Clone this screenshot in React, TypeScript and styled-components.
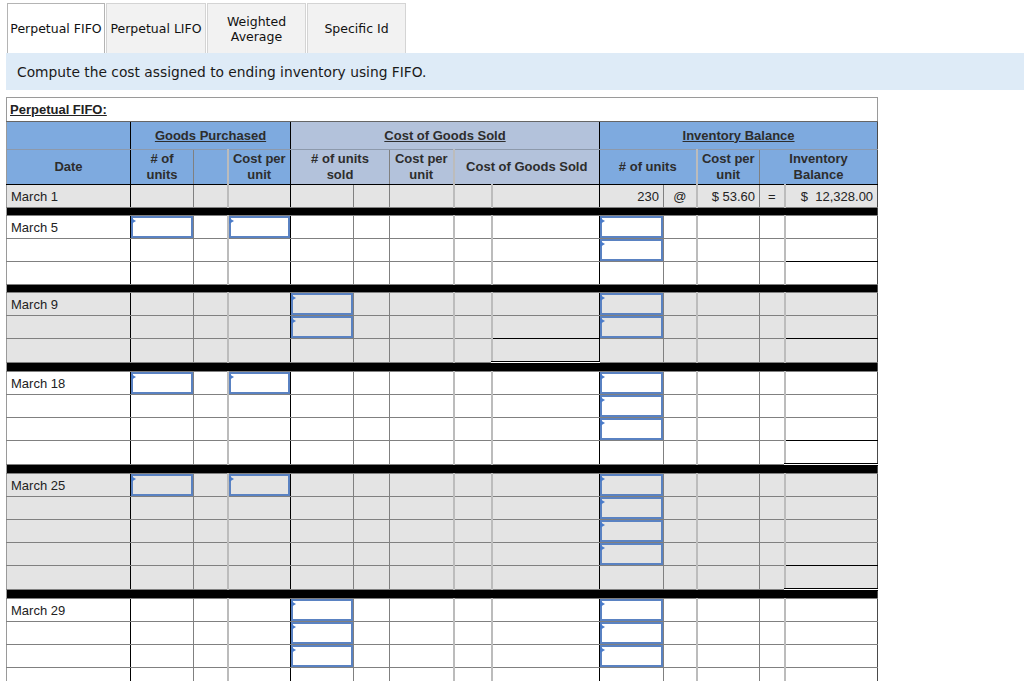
import React from "react";
import styled, { createGlobalStyle } from "styled-components";

const GlobalStyle = createGlobalStyle`
  html, body { margin: 0; padding: 0; background: #fff; overflow: hidden; }
  body { font-family: "Liberation Sans", Arial, sans-serif; }
`;

const Page = styled.div`
  padding: 3px 0 0 6px;
`;

const Tabs = styled.div`
  display: flex;
  gap: 1px;
  padding-left: 1px;
  height: 50px;
`;

const Tab = styled.div<{ $active?: boolean; $w: number }>`
  width: ${(p) => p.$w}px;
  height: 50px;
  box-sizing: border-box;
  display: flex;
  align-items: center;
  justify-content: center;
  text-align: center;
  font-family: "DejaVu Sans", Verdana, sans-serif;
  font-size: 12.5px;
  line-height: 15px;
  color: #111;
  border: 1px solid ${(p) => (p.$active ? "#b4b4b4" : "#d4d4d4")};
  border-bottom: none;
  background: ${(p) => (p.$active ? "#fff" : "#f2f2f2")};
`;

const Prompt = styled.div`
  height: 37px;
  display: flex;
  align-items: center;
  padding-left: 11px;
  background: #deebf7;
  font-family: "DejaVu Sans", Verdana, sans-serif;
  font-size: 13.8px;
  color: #1a1a1a;
  margin-bottom: 7px;
`;

const Sheet = styled.table`
  border-collapse: collapse;
  table-layout: fixed;
  width: 872px;
  font-family: "Liberation Sans", Arial, sans-serif;
  font-size: 13px;
  color: #222;
`;

const Col = styled.col<{ $w: number }>`
  width: ${(p) => p.$w}px;
`;

type Line = "edge" | "black" | "gray" | "light" | "right" | "none";

const LINE: Record<Line, string> = {
  edge: "1px solid #9a9a9a",
  black: "1px solid #000",
  gray: "1px solid #808080",
  light: "2px solid #bcbcbc",
  right: "1px solid #4a4a4a",
  none: "none",
};

const B: Line[] = [
  "edge", "black", "gray", "light", "black", "gray", "gray",
  "light", "light", "black", "gray", "light", "gray", "light", "right",
];
const WIDTHS = [124, 63, 34, 63, 63, 36, 64, 38, 108, 64, 33, 63, 25, 93];

const CaptionCell = styled.td`
  height: 23px;
  padding: 0 3px;
  border: 1px solid #9a9a9a;
  border-bottom: 1px solid #666;
  border-right: 1px solid #9a9a9a;
  font-weight: bold;
  text-decoration: underline;
  color: #222;
  vertical-align: middle;
`;

const HeadCell = styled.td<{
  $l: Line;
  $r: Line;
  $tone: "blue" | "slate";
  $h: number;
  $group?: boolean;
  $bottom: string;
}>`
  height: ${(p) => p.$h}px;
  padding: 0 2px;
  border-left: ${(p) => LINE[p.$l]};
  border-right: ${(p) => LINE[p.$r]};
  border-top: ${(p) => (p.$group ? "1px solid #666" : "1px solid #8d99ab")};
  border-bottom: ${(p) => p.$bottom};
  background: ${(p) => (p.$tone === "blue" ? "#7eaadf" : "#b3c2db")};
  font-weight: bold;
  color: #2d2d2d;
  text-align: center;
  vertical-align: middle;
  line-height: 16px;
  text-decoration: ${(p) => (p.$group ? "underline" : "none")};
`;

const Td = styled.td<{
  $l: Line;
  $r: Line;
  $gray: boolean;
  $top: string;
  $bottom: string;
  $align: "left" | "right" | "center";
  $field?: boolean;
}>`
  height: 22px;
  padding: ${(p) => (p.$field ? "0" : "0 4px")};
  border-left: ${(p) => LINE[p.$l]};
  border-right: ${(p) => LINE[p.$r]};
  border-top: ${(p) => p.$top};
  border-bottom: ${(p) => p.$bottom};
  background: ${(p) => (p.$gray ? "#e4e4e4" : "#fff")};
  text-align: ${(p) => p.$align};
  vertical-align: middle;
  white-space: pre;
  overflow: hidden;
`;

const BarCell = styled.td`
  height: 7px;
  padding: 0;
  background: #000;
  border-top: 1px solid #808080;
  border-bottom: 1px solid #808080;
  border-left: 1px solid #9a9a9a;
  border-right: 1px solid #4a4a4a;
`;

const FieldBox = styled.div<{ $gray: boolean }>`
  position: relative;
  box-sizing: border-box;
  height: 22px;
  border: 2px solid #5a82c2;
  background: ${(p) => (p.$gray ? "transparent" : "#fff")};
  &::before {
    content: "";
    position: absolute;
    left: -2px;
    top: 0;
    border-left: 5px solid #4a7bc9;
    border-top: 3px solid transparent;
    border-bottom: 3px solid transparent;
  }
`;

const Field = styled.input`
  display: block;
  width: 100%;
  height: 100%;
  box-sizing: border-box;
  border: none;
  outline: none;
  background: transparent;
  padding: 0 3px;
  font: inherit;
`;

type Total = { r: number; c: number; dbl: boolean };
type Section = {
  date: string;
  gray: boolean;
  rows: number;
  inputs: string[];
  totals: Total[];
};

const SECTIONS: Section[] = [
  {
    date: "March 5",
    gray: false,
    rows: 3,
    inputs: ["0-1", "0-3", "0-9", "1-9"],
    totals: [{ r: 2, c: 13, dbl: false }],
  },
  {
    date: "March 9",
    gray: true,
    rows: 3,
    inputs: ["0-4", "0-9", "1-4", "1-9"],
    totals: [
      { r: 2, c: 8, dbl: true },
      { r: 2, c: 13, dbl: false },
    ],
  },
  {
    date: "March 18",
    gray: false,
    rows: 4,
    inputs: ["0-1", "0-3", "0-9", "1-9", "2-9"],
    totals: [{ r: 3, c: 13, dbl: true }],
  },
  {
    date: "March 25",
    gray: true,
    rows: 5,
    inputs: ["0-1", "0-3", "0-9", "1-9", "2-9", "3-9"],
    totals: [{ r: 4, c: 13, dbl: true }],
  },
  {
    date: "March 29",
    gray: false,
    rows: 4,
    inputs: ["0-4", "0-9", "1-4", "1-9", "2-4", "2-9"],
    totals: [],
  },
];

const GRAY_LINE = "1px solid #808080";
const BLACK_LINE = "1px solid #000";

function Bar() {
  return (
    <tr>
      <BarCell colSpan={14} />
    </tr>
  );
}

function SectionRows({ s }: { s: Section }) {
  const findTotal = (r: number, c: number) => s.totals.find((t) => t.r === r && t.c === c);
  const rows = [];
  for (let r = 0; r < s.rows; r++) {
    const cells = [];
    for (let c = 0; c < 14; c++) {
      const total = findTotal(r, c);
      const below = findTotal(r + 1, c);
      const top = total ? BLACK_LINE : GRAY_LINE;
      const bottom = total?.dbl ? "3px double #000" : below ? BLACK_LINE : GRAY_LINE;
      const isField = s.inputs.includes(`${r}-${c}`);
      cells.push(
        <Td
          key={c}
          $l={B[c]}
          $r={B[c + 1]}
          $gray={s.gray}
          $top={top}
          $bottom={bottom}
          $align="left"
          $field={isField}
        >
          {isField ? (
            <FieldBox $gray={s.gray}>
              <Field type="text" aria-label={`${s.date} row ${r + 1} column ${c + 1}`} />
            </FieldBox>
          ) : c === 0 && r === 0 ? (
            s.date
          ) : null}
        </Td>
      );
    }
    rows.push(<tr key={r}>{cells}</tr>);
  }
  return <>{rows}</>;
}

function OpeningRow() {
  const content: Record<number, { text: string; align: "left" | "right" | "center" }> = {
    0: { text: "March 1", align: "left" },
    9: { text: "230", align: "right" },
    10: { text: "@", align: "center" },
    11: { text: "$ 53.60", align: "right" },
    12: { text: "=", align: "center" },
    13: { text: "$  12,328.00", align: "right" },
  };
  return (
    <tr>
      {WIDTHS.map((_, c) => (
        <Td
          key={c}
          $l={B[c]}
          $r={B[c + 1]}
          $gray
          $top={BLACK_LINE}
          $bottom={GRAY_LINE}
          $align={content[c]?.align ?? "left"}
        >
          {content[c]?.text ?? null}
        </Td>
      ))}
    </tr>
  );
}

export default function App() {
  const r2Bottom = BLACK_LINE;
  const r1Bottom = "1px solid #8d99ab";
  return (
    <>
      <GlobalStyle />
      <Page>
        <Tabs>
          <Tab $active $w={98}>Perpetual FIFO</Tab>
          <Tab $w={100}>Perpetual LIFO</Tab>
          <Tab $w={99}>
            Weighted
            <br />
            Average
          </Tab>
          <Tab $w={99}>Specific Id</Tab>
        </Tabs>
        <Prompt>Compute the cost assigned to ending inventory using FIFO.</Prompt>
        <Sheet>
          <colgroup>
            {WIDTHS.map((w, i) => (
              <Col key={i} $w={w} />
            ))}
          </colgroup>
          <tbody>
            <tr>
              <CaptionCell colSpan={14}>Perpetual FIFO:</CaptionCell>
            </tr>
            <tr>
              <HeadCell $l={B[0]} $r={B[1]} $tone="blue" $h={27} $group $bottom={r1Bottom} />
              <HeadCell colSpan={3} $l={B[1]} $r={B[4]} $tone="blue" $h={27} $group $bottom={r1Bottom}>
                Goods Purchased
              </HeadCell>
              <HeadCell colSpan={5} $l={B[4]} $r={B[9]} $tone="slate" $h={27} $group $bottom={r1Bottom}>
                Cost of Goods Sold
              </HeadCell>
              <HeadCell colSpan={5} $l={B[9]} $r={B[14]} $tone="blue" $h={27} $group $bottom={r1Bottom}>
                Inventory Balance
              </HeadCell>
            </tr>
            <tr>
              <HeadCell $l={B[0]} $r={B[1]} $tone="blue" $h={34} $bottom={r2Bottom}>
                Date
              </HeadCell>
              <HeadCell $l={B[1]} $r={B[2]} $tone="blue" $h={34} $bottom={r2Bottom}>
                # of
                <br />
                units
              </HeadCell>
              <HeadCell $l={B[2]} $r={B[3]} $tone="blue" $h={34} $bottom={r2Bottom} />
              <HeadCell $l={B[3]} $r={B[4]} $tone="blue" $h={34} $bottom={r2Bottom}>
                Cost per
                <br />
                unit
              </HeadCell>
              <HeadCell colSpan={2} $l={B[4]} $r={B[6]} $tone="slate" $h={34} $bottom={r2Bottom}>
                # of units
                <br />
                sold
              </HeadCell>
              <HeadCell $l={B[6]} $r={B[7]} $tone="slate" $h={34} $bottom={r2Bottom}>
                Cost per
                <br />
                unit
              </HeadCell>
              <HeadCell colSpan={2} $l={B[7]} $r={B[9]} $tone="slate" $h={34} $bottom={r2Bottom}>
                Cost of Goods Sold
              </HeadCell>
              <HeadCell colSpan={2} $l={B[9]} $r={B[11]} $tone="blue" $h={34} $bottom={r2Bottom}>
                # of units
              </HeadCell>
              <HeadCell $l={B[11]} $r={B[12]} $tone="blue" $h={34} $bottom={r2Bottom}>
                Cost per
                <br />
                unit
              </HeadCell>
              <HeadCell colSpan={2} $l={B[12]} $r={B[14]} $tone="blue" $h={34} $bottom={r2Bottom}>
                Inventory
                <br />
                Balance
              </HeadCell>
            </tr>
            <OpeningRow />
            {SECTIONS.map((s) => (
              <React.Fragment key={s.date}>
                <Bar />
                <SectionRows s={s} />
              </React.Fragment>
            ))}
          </tbody>
        </Sheet>
      </Page>
    </>
  );
}
